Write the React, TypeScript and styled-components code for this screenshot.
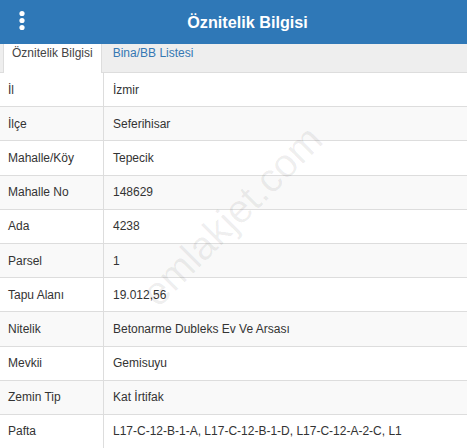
import React from "react";
import styled, { createGlobalStyle } from "styled-components";

const Global = createGlobalStyle`
  html, body { margin: 0; padding: 0; background: #fff; }
  body { font-family: "Liberation Sans", Arial, sans-serif; color: #333; overflow: hidden; }
  * { box-sizing: border-box; }
`;

const Page = styled.div`
  position: relative;
  width: 467px;
  height: 448px;
  overflow: hidden;
`;

const Header = styled.header`
  height: 44px;
  background: #2f78b7;
  display: flex;
  align-items: center;
  justify-content: center;
  padding-left: 28px;
  position: relative;
`;

const Title = styled.h1`
  margin: 0;
  color: #fff;
  font-size: 16.2px;
  font-weight: bold;
`;

const Kebab = styled.svg`
  position: absolute;
  left: 16px;
  top: 10px;
`;

const TabBar = styled.nav`
  height: 29px;
  background: #eee;
  border-bottom: 1px solid #ddd;
  display: flex;
  padding-left: 3px;
`;

const Tab = styled.div<{ $active?: boolean }>`
  height: 29px;
  padding: 2px ${(p) => (p.$active ? "8px" : "11px")} 0;
  font-size: 12px;
  line-height: 14px;
  background: ${(p) => (p.$active ? "#fff" : "transparent")};
  color: ${(p) => (p.$active ? "#444" : "#3578b3")};
  border-right: ${(p) => (p.$active ? "1px solid #ddd" : "none")};
  border-left: ${(p) => (p.$active ? "1px solid #ddd" : "none")};
  margin-bottom: -1px;
`;

const Table = styled.div`
  display: grid;
  grid-template-columns: 104px 1fr;
`;

const Cell = styled.div<{ $striped: boolean; $label?: boolean }>`
  height: 34.2px;
  display: flex;
  align-items: center;
  padding-left: ${(p) => (p.$label ? "8px" : "9px")};
  font-size: 12px;
  white-space: nowrap;
  overflow: hidden;
  background: ${(p) => (p.$striped ? "#f9f9f9" : "#fff")};
  border-bottom: 1px solid #ddd;
  border-right: ${(p) => (p.$label ? "1px solid #ddd" : "none")};
`;

const Watermark = styled.div`
  position: absolute;
  left: 232px;
  top: 216px;
  transform: translate(-50%, -50%) rotate(-45deg);
  font-size: 40px;
  color: rgba(0, 0, 0, 0.065);
  white-space: nowrap;
  pointer-events: none;
`;

const rows: [string, string][] = [
  ["İl", "İzmir"],
  ["İlçe", "Seferihisar"],
  ["Mahalle/Köy", "Tepecik"],
  ["Mahalle No", "148629"],
  ["Ada", "4238"],
  ["Parsel", "1"],
  ["Tapu Alanı", "19.012,56"],
  ["Nitelik", "Betonarme Dubleks Ev Ve Arsası"],
  ["Mevkii", "Gemisuyu"],
  ["Zemin Tip", "Kat İrtifak"],
  ["Pafta", "L17-C-12-B-1-A, L17-C-12-B-1-D, L17-C-12-A-2-C, L1"],
];

export default function App() {
  return (
    <Page>
      <Global />
      <Header>
        <Kebab width="12" height="22" viewBox="0 0 12 22">
          <circle cx="6" cy="3.5" r="2.6" fill="#fff" />
          <circle cx="6" cy="10.5" r="2.6" fill="#fff" />
          <circle cx="6" cy="17.5" r="2.6" fill="#fff" />
        </Kebab>
        <Title>Öznitelik Bilgisi</Title>
      </Header>
      <TabBar>
        <Tab $active>Öznitelik Bilgisi</Tab>
        <Tab>Bina/BB Listesi</Tab>
      </TabBar>
      <Table>
        {rows.map(([k, v], i) => (
          <React.Fragment key={k}>
            <Cell $label $striped={i % 2 === 1}>{k}</Cell>
            <Cell $striped={i % 2 === 1}>{v}</Cell>
          </React.Fragment>
        ))}
      </Table>
      <Watermark>emlakjet.com</Watermark>
    </Page>
  );
}
